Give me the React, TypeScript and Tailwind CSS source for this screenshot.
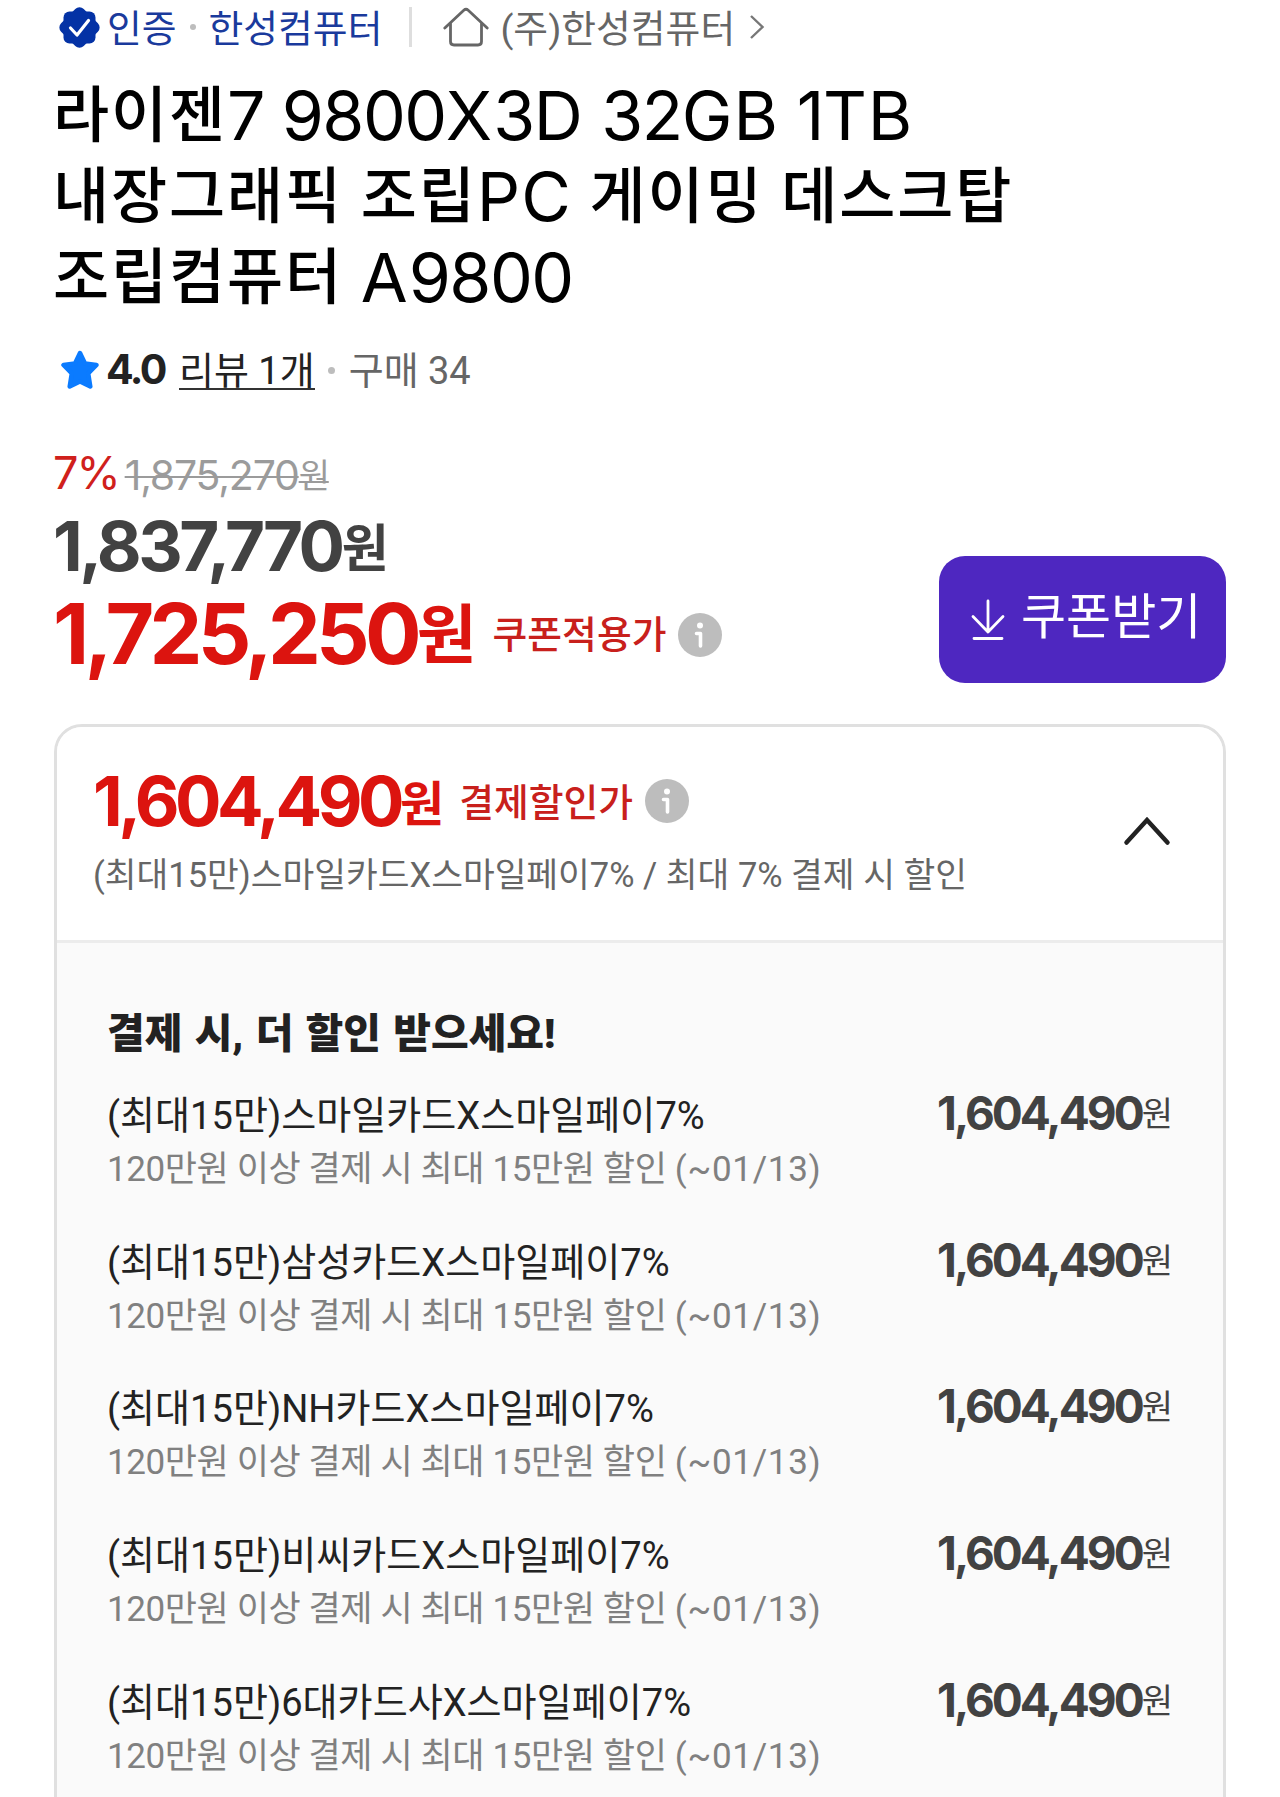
import React from 'react';

interface PayOption {
  id: string;
  title: string;
  desc: string;
  until: string;
  price: string;
}

const payOptions: PayOption[] = [
  { id: 'smile', title: '(최대15만)스마일카드X스마일페이7%', desc: '120만원 이상 결제 시 최대 15만원 할인', until: '(~01/13)', price: '1,604,490' },
  { id: 'samsung', title: '(최대15만)삼성카드X스마일페이7%', desc: '120만원 이상 결제 시 최대 15만원 할인', until: '(~01/13)', price: '1,604,490' },
  { id: 'nh', title: '(최대15만)NH카드X스마일페이7%', desc: '120만원 이상 결제 시 최대 15만원 할인', until: '(~01/13)', price: '1,604,490' },
  { id: 'bc', title: '(최대15만)비씨카드X스마일페이7%', desc: '120만원 이상 결제 시 최대 15만원 할인', until: '(~01/13)', price: '1,604,490' },
  { id: 'six', title: '(최대15만)6대카드사X스마일페이7%', desc: '120만원 이상 결제 시 최대 15만원 할인', until: '(~01/13)', price: '1,604,490' },
];

const VerifiedIcon = () => (
  <svg className="w-[43px] h-[43px] shrink-0" viewBox="0 0 43 43">
    <g fill="#0432a5">
      <rect x="5.500" y="5.500" width="32" height="32" rx="6" />
      <rect x="5.500" y="5.500" width="32" height="32" rx="6" transform="rotate(45 21.5 21.5)" />
    </g>
    <path d="M12.5 22l6.500 7L30.500 14.500" fill="none" stroke="#fff" strokeWidth="3.2" strokeLinecap="round" strokeLinejoin="round" />
  </svg>
);

const HomeIcon = () => (
  <svg className="w-[46px] h-[40px] shrink-0" viewBox="0 0 46 40" fill="none" stroke="#666" strokeWidth="2.8" strokeLinecap="round" strokeLinejoin="round">
    <path d="M1.800 21L20.800 3.200Q23 1.200 25.200 3.200L44.200 21" />
    <path d="M7.500 17V34.500Q7.500 38 11 38H35Q38.500 38 38.500 34.500V17" />
  </svg>
);

const StarIcon = () => (
  <svg className="w-[38px] h-[40px] shrink-0" viewBox="0 0 38 40">
    <path
      d="M19 3L24 13.500L35.500 15L27.200 23.400L29.300 36.500L19 31.500L8.700 36.500L10.800 23.400L2.500 15L14 13.500Z"
      fill="#0b7bff"
      stroke="#0b7bff"
      strokeWidth="4.5"
      strokeLinejoin="round"
    />
  </svg>
);

const InfoIcon = () => (
  <svg className="w-[44px] h-[44px] shrink-0" viewBox="0 0 44 44">
    <circle cx="22" cy="22" r="22" fill="#bdbdbd" />
    <circle cx="22" cy="12.500" r="3" fill="#fff" />
    <path d="M18.500 20.500H22.500V33" fill="none" stroke="#fff" strokeWidth="3.6" strokeLinecap="round" strokeLinejoin="round" />
  </svg>
);

const DownloadIcon = () => (
  <svg className="w-[34px] h-[42px] shrink-0" viewBox="0 0 34 42" fill="none" stroke="#fff" strokeWidth="2.8" strokeLinecap="round" strokeLinejoin="round">
    <path d="M17 2V33M2 17.500L17 33L32 17.500M3 39.500H31" />
  </svg>
);

// Latin letters and digits are set larger than the Hangul around them
const Mixed: React.FC<{ text: string }> = ({ text }) => (
  <>
    {text.split(/([A-Z]+|[0-9]+)/).map((part, i) => {
      if (i % 2 === 0) return part;
      return (
        <span
          key={i}
          className={`font-['Inter'] font-normal text-[68px] leading-[1px] align-[-3px] ${
            /[0-9]/.test(part) ? 'tracking-[-1.5px]' : 'tracking-[1px]'
          }`}
        >
          {part}
        </span>
      );
    })}
  </>
);

const Title: React.FC = () => {
  const lines = ['라이젠7 9800X3D 32GB 1TB', '내장그래픽 조립PC 게이밍 데스크탑', '조립컴퓨터 A9800'];
  return (
    <h1 className="mt-[16px] ml-[53px] text-[61px] tracking-[1.900px] [word-spacing:2px] font-medium text-black font-['Noto_Sans_CJK_KR',sans-serif]">
      {lines.map((line) => (
        <div key={line} className="h-[81px] leading-[81px] whitespace-nowrap">
          <Mixed text={line} />
        </div>
      ))}
    </h1>
  );
};

const App: React.FC = () => {
  return (
    <div className="w-[1280px] h-[1797px] overflow-hidden bg-white font-['Roboto','Noto_Sans_CJK_KR',sans-serif]">
      {/* Store line */}
      <div className="flex items-center h-[54px] pl-[58px] text-[37.800px] whitespace-nowrap">
        <VerifiedIcon />
        <span className="ml-[6px] pt-[4px] text-[#1a3a9c]">인증</span>
        <span className="ml-[13px] w-[6px] h-[6px] rounded-full bg-[#bdbdbd]"></span>
        <span className="ml-[13px] pt-[4px] text-[#1a3a9c]">한성컴퓨터</span>
        <span className="ml-[27px] w-[3px] h-[40px] bg-[#dedede]"></span>
        <span className="ml-[31px]"><HomeIcon /></span>
        <span className="ml-[11px] pt-[4px] text-[#666]">(주)한성컴퓨터</span>
        <svg className="ml-[14px] w-[16px] h-[26px]" viewBox="0 0 16 26" fill="none" stroke="#777" strokeWidth="2.4">
          <path d="M2 2L13.500 13L2 24" />
        </svg>
      </div>

      <Title />

      {/* Rating */}
      <div className="flex items-center h-[60px] mt-[27px] pl-[61px] text-[38px] whitespace-nowrap">
        <StarIcon />
        <span className="ml-[7px] font-['Inter'] font-bold text-[41px] tracking-[-2.500px] text-[#222]">4.0</span>
        <span className="ml-[14px] h-[39px] leading-[41px] border-b-2 border-[#333] text-[#222]">리뷰 1개</span>
        <span className="ml-[13px] w-[7px] h-[7px] rounded-full bg-[#bdbdbd]"></span>
        <span className="ml-[14px] pt-[2px] text-[#666]">구매 34</span>
      </div>

      {/* Prices */}
      <div className="flex items-center h-[50px] mt-[48px] pl-[53px] whitespace-nowrap">
        <span className="font-['Inter'] text-[45px] tracking-[-2px] text-[#d0201c]">7%</span>
        <span className="ml-[6px] mt-[3px] h-[46px] leading-[46px] line-through decoration-2 text-[#9b9b9b] font-['Inter','Noto_Sans_CJK_KR'] text-[41px] tracking-[-1.2px]">
          1,875,270<span className="text-[34px] align-[2px]">원</span>
        </span>
      </div>
      <div className="flex justify-between">
        <div className="pl-[53px] pt-[7px]">
          <div className="h-[84px] leading-[82px] text-[#424242] font-bold whitespace-nowrap">
            <span className="font-['Inter'] text-[69px] tracking-[-3.500px]">1,837,770</span>
            <span className="text-[51px] leading-[1px] align-[4px]">원</span>
          </div>
          <div className="flex items-center h-[92px] whitespace-nowrap">
            <div className="leading-[70px] pt-[22px] text-[#dc140f] font-bold">
              <span className="font-['Inter'] text-[84px] tracking-[-4.800px]">1,725,250</span>
              <span className="text-[65px] leading-[1px] align-[6px]">원</span>
            </div>
            <span className="ml-[16px] mr-[12px] text-[37.800px] font-medium text-[#c8201c]">쿠폰적용가</span>
            <InfoIcon />
          </div>
        </div>
        <button className="flex items-center mt-[58px] mr-[54px] w-[287px] h-[127px] pl-[32px] rounded-[26px] bg-[#4e27c0] text-white text-[49px] whitespace-nowrap">
          <DownloadIcon />
          <span className="ml-[16px] mb-[3px]">쿠폰받기</span>
        </button>
      </div>

      {/* Payment discount card */}
      <div className="mt-[41px] ml-[54px] w-[1172px] h-[1120px] rounded-t-[28px] border-[3px] border-[#e0e0e0] bg-[#fafafa] overflow-hidden">
        <div className="flex justify-between h-[216px] pl-[36px] bg-white border-b-[3px] border-[#ececec] whitespace-nowrap">
          <div>
            <div className="flex items-center h-[80px] mt-[34px]">
              <div className="leading-[66px] pt-[20px] text-[#dc140f] font-bold">
                <span className="font-['Inter'] text-[69px] tracking-[-4.500px]">1,604,490</span>
                <span className="text-[48px] leading-[1px] align-[5px]">원</span>
              </div>
              <span className="ml-[15px] mr-[12px] pt-[4px] text-[37.800px] font-medium text-[#c8201c]">결제할인가</span>
              <InfoIcon />
            </div>
            <div className="h-[50px] mt-[9px] leading-[50px] text-[34.500px] text-[#666]">
              (최대15만)스마일카드X스마일페이7% / 최대 7% 결제 시 할인
            </div>
          </div>
          <svg className="mt-[88px] mr-[52px] w-[48px] h-[32px]" viewBox="0 0 48 32" fill="none" stroke="#222" strokeWidth="4.500" strokeLinecap="round">
            <path d="M3.500 27.500L24 5L44.500 27.500" />
          </svg>
        </div>

        <div className="pl-[50px] pr-[50px] pt-[61px] whitespace-nowrap">
          <h2 className="h-[60px] leading-[60px] text-[41px] [word-spacing:2px] font-black text-[#222]">결제 시, 더 할인 받으세요!</h2>
          <ul className="mt-[25px]">
            {payOptions.map((option) => (
              <li key={option.id} className="flex justify-between h-[146.700px]">
                <div>
                  <div className="h-[54px] leading-[54px] text-[38.100px] text-[#222]">{option.title}</div>
                  <div className="h-[54px] leading-[54px] text-[35px] tracking-[-0.400px] text-[#808080]">
                    {option.desc} <span className="tracking-[0.700px]">{option.until}</span>
                  </div>
                </div>
                <div className="h-[54px] leading-[49px] text-[#424242]">
                  <span className="font-['Inter'] font-bold text-[46px] tracking-[-3px]">{option.price}</span>
                  <span className="text-[34px] leading-[1px] align-[4px]">원</span>
                </div>
              </li>
            ))}
          </ul>
        </div>
      </div>
    </div>
  );
};

export default App;
